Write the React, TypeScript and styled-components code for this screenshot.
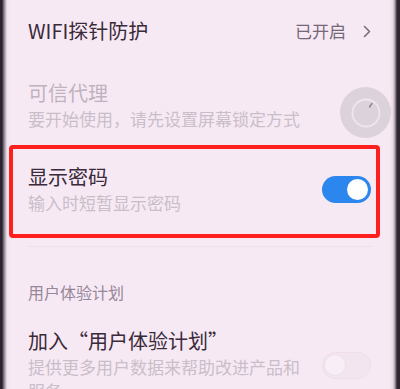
import React from "react";
import styled, { createGlobalStyle } from "styled-components";

const GlobalStyle = createGlobalStyle`
  html, body {
    margin: 0;
    padding: 0;
  }
  body {
    font-family: "Noto Sans CJK SC", "Noto Sans", sans-serif;
    background: #f7e9f4;
  }
`;

const Screen = styled.div`
  position: relative;
  width: 400px;
  height: 389px;
  overflow: hidden;
  background: linear-gradient(
    to right,
    #2a2230 0,
    #2a2230 2px,
    #8a7f8c 4px,
    #efe3ec 7px,
    #f7e9f4 11px,
    #f7e9f4 390px,
    #e6dae3 393px,
    #a49aa5 395px,
    #2e2632 397px
  );
`;

const Row = styled.div<{ $pt: number; $pb: number }>`
  position: relative;
  display: flex;
  align-items: center;
  justify-content: space-between;
  gap: 14px;
  padding: ${(p) => p.$pt}px 29px ${(p) => p.$pb}px 28px;
`;

const TextBlock = styled.div`
  flex: 1;
  min-width: 0;
  display: flex;
  flex-direction: column;
  gap: 1px;
`;

const Title = styled.div<{ $disabled?: boolean }>`
  font-size: 20px;
  line-height: 26px;
  color: ${(p) => (p.$disabled ? "#bfb3bf" : "#3a2a3a")};
  white-space: nowrap;
`;

const Sub = styled.div<{ $disabled?: boolean }>`
  font-size: 17px;
  line-height: 24px;
  color: ${(p) => (p.$disabled ? "#c9bec9" : "#bdb1bd")};
`;

const Value = styled.div`
  display: flex;
  align-items: center;
  gap: 17px;
  font-size: 17px;
  line-height: 26px;
  color: #756878;
`;

const Toggle = styled.div<{ $on?: boolean }>`
  position: relative;
  flex: none;
  width: 49px;
  height: 27px;
  border-radius: 14px;
  box-sizing: border-box;
  background: ${(p) => (p.$on ? "#2b86ee" : "#f3e5f0")};
  border: ${(p) => (p.$on ? "none" : "1.5px solid #eedeea")};
  &::after {
    content: "";
    position: absolute;
    top: ${(p) => (p.$on ? 3 : 2)}px;
    ${(p) => (p.$on ? "right: 3px;" : "left: 2px;")}
    width: ${(p) => (p.$on ? 21 : 20)}px;
    height: ${(p) => (p.$on ? 21 : 20)}px;
    border-radius: 50%;
    background: ${(p) => (p.$on ? "#ffffff" : "#f8eff6")};
    box-shadow: ${(p) => (p.$on ? "none" : "0 0 0 1px #efe0eb")};
  }
`;

const Highlight = styled.div`
  position: absolute;
  top: 0;
  bottom: 0;
  left: 9px;
  right: 20px;
  border: 4px solid #fe1f1f;
  border-radius: 4px;
  pointer-events: none;
`;

const Divider = styled.div`
  height: 1px;
  margin: 8px 28px 0;
  background: #efe1eb;
`;

const SectionHeader = styled.div`
  padding: 34px 28px 0;
  font-size: 16px;
  line-height: 22px;
  color: #968799;
`;

const FloatButton = styled.div`
  position: absolute;
  left: 340px;
  top: 87px;
  width: 51px;
  height: 51px;
  border-radius: 50%;
  background: rgba(208, 199, 208, 0.7);
  display: flex;
  align-items: center;
  justify-content: center;
`;

const Chevron = () => (
  <svg width="8" height="13" viewBox="0 0 8 13">
    <polyline
      points="1.5,1.5 6.5,6.5 1.5,11.5"
      fill="none"
      stroke="#7a6c7c"
      strokeWidth="1.6"
      strokeLinecap="round"
      strokeLinejoin="round"
    />
  </svg>
);

const App: React.FC = () => {
  return (
    <Screen>
      <GlobalStyle />

      <Row $pt={18} $pb={18}>
        <Title>WIFI探针防护</Title>
        <Value>
          已开启
          <Chevron />
        </Value>
      </Row>

      <Row $pt={18} $pb={14}>
        <TextBlock>
          <Title $disabled>可信代理</Title>
          <Sub $disabled>要开始使用，请先设置屏幕锁定方式</Sub>
        </TextBlock>
      </Row>

      <Row $pt={19} $pb={23}>
        <TextBlock>
          <Title>显示密码</Title>
          <Sub $disabled>输入时短暂显示密码</Sub>
        </TextBlock>
        <Toggle $on />
        <Highlight />
      </Row>

      <Divider />

      <SectionHeader>用户体验计划</SectionHeader>

      <Row $pt={25} $pb={10}>
        <TextBlock>
          <Title>加入“用户体验计划”</Title>
          <Sub $disabled>提供更多用户数据来帮助改进产品和服务</Sub>
        </TextBlock>
        <Toggle />
      </Row>

      <FloatButton>
        <svg width="32" height="32" viewBox="0 0 32 32">
          <circle cx="16" cy="16" r="13.5" fill="none" stroke="#eee6ed" strokeWidth="1.8" />
          <path d="M22 6.5 L19.5 10" fill="none" stroke="#8c808c" strokeWidth="1.3" strokeLinecap="round" />
        </svg>
      </FloatButton>
    </Screen>
  );
};

export default App;
